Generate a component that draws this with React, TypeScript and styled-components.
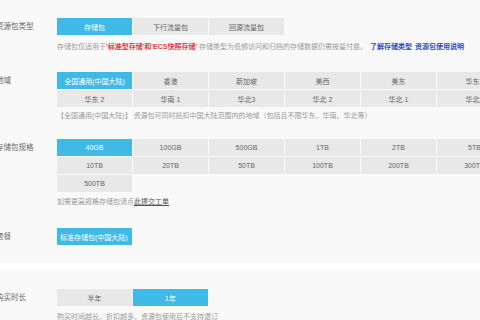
import React from 'react';
import styled, { createGlobalStyle } from 'styled-components';

const GlobalStyle = createGlobalStyle`
    html, body {
        margin: 0;
        padding: 0;
        background: #ffffff;
        font-family: "Liberation Sans", "Noto Sans CJK SC", sans-serif;
    }
    * {
        box-sizing: border-box;
    }
`;

const Page = styled.div`
    width: 480px;
    height: 320px;
    overflow: hidden;
    display: flex;
    flex-direction: column;
    gap: 6px;
`;

const Panel = styled.section<{ $top: number; $bottom: number }>`
    background: #f9f9f9;
    padding: ${(p) => p.$top}px 0 ${(p) => p.$bottom}px;
    display: flex;
    flex-direction: column;
`;

const FormRow = styled.div<{ $gap?: number }>`
    display: flex;
    align-items: flex-start;
    margin-top: ${(p) => p.$gap ?? 0}px;
`;

const Label = styled.div`
    width: 61px;
    margin-left: -4px;
    flex-shrink: 0;
    font-size: 7.5px;
    line-height: 17px;
    color: #666;
    white-space: nowrap;
`;

const Field = styled.div`
    display: flex;
    flex-direction: column;
    min-width: 0;
`;

const OptionGrid = styled.div<{ $cols: number }>`
    display: grid;
    grid-template-columns: repeat(${(p) => p.$cols}, 75px);
    grid-auto-rows: 17px;
    gap: 1px;
`;

const Option = styled.div<{ $active?: boolean }>`
    background: ${(p) => (p.$active ? '#3fb9e6' : '#e8e8e8')};
    color: ${(p) => (p.$active ? '#fff' : '#666')};
    font-size: 7px;
    display: flex;
    align-items: center;
    justify-content: center;
    white-space: nowrap;
    overflow: hidden;
`;

const Tag = styled.div`
    align-self: flex-start;
    height: 17px;
    width: 75px;
    padding: 0 3px;
    background: #3fb9e6;
    color: #fff;
    font-size: 7px;
    display: flex;
    align-items: center;
    white-space: nowrap;
`;

const Hint = styled.div<{ $gap: number }>`
    margin-top: ${(p) => p.$gap}px;
    font-size: 7px;
    line-height: 12px;
    color: #999;
    white-space: nowrap;
`;

const Red = styled.span`
    color: #e4393c;
    font-weight: 700;
`;

const Link = styled.a`
    color: #2f48c6;
    font-weight: 700;
    text-decoration: none;
    margin-left: 3px;
`;

const Ticket = styled.a`
    color: #555;
    text-decoration: underline;
`;

const regions = [
    ['全国通用(中国大陆)', '香港', '新加坡', '美西', '美东', '华东1'],
    ['华东 2', '华南 1', '华北3', '华北 2', '华北 1', '华北5'],
];

const sizes = [
    '40GB', '100GB', '500GB', '1TB', '2TB', '5TB',
    '10TB', '20TB', '50TB', '100TB', '200TB', '300TB',
    '500TB',
];

const App: React.FC = () => {
    return (
        <>
            <GlobalStyle />
            <Page>
                <Panel $top={18} $bottom={18}>
                    <FormRow>
                        <Label>资源包类型</Label>
                        <Field>
                            <OptionGrid $cols={3}>
                                <Option $active>存储包</Option>
                                <Option>下行流量包</Option>
                                <Option>回源流量包</Option>
                            </OptionGrid>
                            <Hint $gap={6}>
                                存储包仅适用于<Red>'标准型存储'和'ECS快照存储'</Red> 存储类型为低频访问和归档的存储数据仍需按量付费。
                                <Link href="#">了解存储类型</Link>
                                <Link href="#">资源包使用说明</Link>
                            </Hint>
                        </Field>
                    </FormRow>

                    <FormRow $gap={19}>
                        <Label>地域</Label>
                        <Field>
                            <OptionGrid $cols={6}>
                                {regions.flat().map((r, i) => (
                                    <Option key={r} $active={i === 0}>{r}</Option>
                                ))}
                            </OptionGrid>
                            <Hint $gap={3}>
                                【全国通用(中国大陆)】 资源包可同时抵扣中国大陆范围内的地域（包括且不限华东、华南、华北等）
                            </Hint>
                        </Field>
                    </FormRow>

                    <FormRow $gap={17}>
                        <Label>存储包规格</Label>
                        <Field>
                            <OptionGrid $cols={6}>
                                {sizes.map((s, i) => (
                                    <Option key={s} $active={i === 0}>{s}</Option>
                                ))}
                            </OptionGrid>
                            <Hint $gap={4}>
                                如需更高规格存储包请点<Ticket href="#">此提交工单</Ticket>
                            </Hint>
                        </Field>
                    </FormRow>

                    <FormRow $gap={20}>
                        <Label>套餐</Label>
                        <Field>
                            <Tag>标准存储包(中国大陆)</Tag>
                        </Field>
                    </FormRow>
                </Panel>

                <Panel $top={20} $bottom={20}>
                    <FormRow>
                        <Label>购买时长</Label>
                        <Field>
                            <OptionGrid $cols={2}>
                                <Option>半年</Option>
                                <Option $active>1年</Option>
                            </OptionGrid>
                            <Hint $gap={5}>
                                购买时间越长，折扣越多，资源包使用后不支持退订
                            </Hint>
                        </Field>
                    </FormRow>
                </Panel>
            </Page>
        </>
    );
};

export default App;
